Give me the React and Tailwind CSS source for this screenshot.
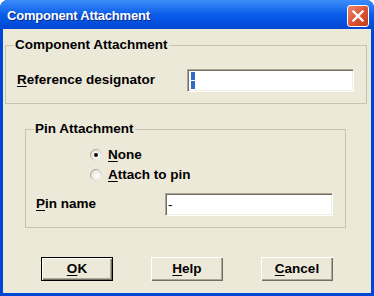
import React from 'react'

// Ventana de diálogo estilo Windows XP: "Component Attachment"

function Radio({ checked, id }) {
  return (
    <svg width="12" height="12" viewBox="0 0 12 12" className="shrink-0">
      <defs>
        <linearGradient id={`rs-${id}`} x1="0" y1="0" x2="1" y2="1">
          <stop offset="0" stopColor="#8E8C80" />
          <stop offset="0.5" stopColor="#C9C7BA" />
          <stop offset="1" stopColor="#FFFFFF" />
        </linearGradient>
        <radialGradient id={`rf-${id}`} cx="0.6" cy="0.6" r="0.6">
          <stop offset="0" stopColor="#FFFFFF" />
          <stop offset="1" stopColor="#E4E1D4" />
        </radialGradient>
      </defs>
      <circle cx="6" cy="6" r="5.5" fill={`url(#rf-${id})`} stroke={`url(#rs-${id})`} strokeWidth="1" />
      {checked && <circle cx="6" cy="6" r="2" fill="#111" />}
    </svg>
  )
}

function Button({ children, isDefault }) {
  const inner = (
    <div className="flex h-full w-full items-center justify-center bg-[#ECE9D8] text-[13.5px] font-bold text-black shadow-[inset_1px_1px_#FFFFFF,inset_-1px_-1px_#716F64,inset_-2px_-2px_#ACA899]">
      {children}
    </div>
  )
  return isDefault ? (
    <div className="h-[24px] w-[72px] border border-black">{inner}</div>
  ) : (
    <div className="h-[24px] w-[72px]">{inner}</div>
  )
}

function Input({ width, children }) {
  return (
    <div
      className={`flex h-[23px] shrink-0 items-center border border-b-white border-l-[#ACA899] border-r-white border-t-[#ACA899] bg-white pl-[2px] shadow-[inset_1px_1px_#716F64,inset_-1px_-1px_#F1EFE2] ${width}`}
    >
      {children}
    </div>
  )
}

export default function App() {
  return (
    <div className="h-[296px] w-[374px] bg-white font-['Liberation_Sans',Arial,sans-serif]">
      <div className="flex h-full flex-col overflow-hidden rounded-t-[8px] bg-[#0047D6]">
        {/* Barra de título */}
        <div className="flex h-[29px] shrink-0 items-start justify-between bg-gradient-to-b from-[#3C8DF8] via-[#0A5CEA] to-[#0046D2] pl-[7px] pr-[5px] pt-[5px]">
          <span className="h-[22px] text-[13px] font-bold leading-[22px] tracking-[-0.2px] text-white [text-shadow:1px_1px_#0A2A8C]">
            Component Attachment
          </span>
          <div className="flex h-[22px] w-[22px] items-center justify-center rounded-[3px] border border-white bg-gradient-to-br from-[#E98A6E] via-[#DC5535] to-[#C23A18]">
            <svg width="12" height="12" viewBox="0 0 12 12">
              <path d="M1.5 1.5 L10.5 10.5 M10.5 1.5 L1.5 10.5" stroke="#FFFFFF" strokeWidth="2.3" strokeLinecap="square" />
            </svg>
          </div>
        </div>

        {/* Cuerpo */}
        <div className="mx-[3px] mb-[3px] flex-1 bg-[#ECE9D8] text-[13.5px] text-black">
          <fieldset className="ml-[2px] mt-[8px] w-[362px] border border-[#C7C5B2] pb-[11px]">
            <legend className="ml-[8px] px-[1px] font-bold leading-[16px]">Component Attachment</legend>
            <div className="flex items-center pt-[16px]">
              <span className="w-[181px] shrink-0 pl-[11px] font-bold">
                <span className="underline underline-offset-2">R</span>eference designator
              </span>
              <Input width="w-[167px]">
                <div className="flex flex-col gap-[1px] pl-[1px]">
                  <span className="block h-[8px] w-[4px] bg-[#316AC5]" />
                  <span className="block h-[8px] w-[4px] bg-[#316AC5]" />
                </div>
              </Input>
            </div>
          </fieldset>

          <fieldset className="ml-[22px] mt-[17px] w-[321px] border border-[#C7C5B2] pb-[11px]">
            <legend className="ml-[8px] px-[1px] font-bold leading-[16px]">Pin Attachment</legend>
            <div className="flex flex-col pl-[64px] pt-[8px]">
              <label className="flex h-[20px] items-center gap-[6px] font-bold">
                <Radio checked id="none" />
                <span>
                  <span className="underline underline-offset-2">N</span>one
                </span>
              </label>
              <label className="flex h-[20px] items-center gap-[6px] font-bold">
                <Radio id="pin" />
                <span>
                  <span className="underline underline-offset-2">A</span>ttach to pin
                </span>
              </label>
            </div>
            <div className="mt-[8px] flex items-center">
              <span className="w-[139px] shrink-0 pl-[10px] font-bold">
                <span className="underline underline-offset-2">P</span>in name
              </span>
              <Input width="w-[168px]">
                <span className="leading-none">-</span>
              </Input>
            </div>
          </fieldset>

          <div className="mt-[29px] flex gap-[38px] pl-[38px]">
            <Button isDefault>
              <span className="underline underline-offset-2">O</span>K
            </Button>
            <Button>
              <span className="underline underline-offset-2">H</span>elp
            </Button>
            <Button>
              <span className="underline underline-offset-2">C</span>ancel
            </Button>
          </div>
        </div>
      </div>
    </div>
  )
}
